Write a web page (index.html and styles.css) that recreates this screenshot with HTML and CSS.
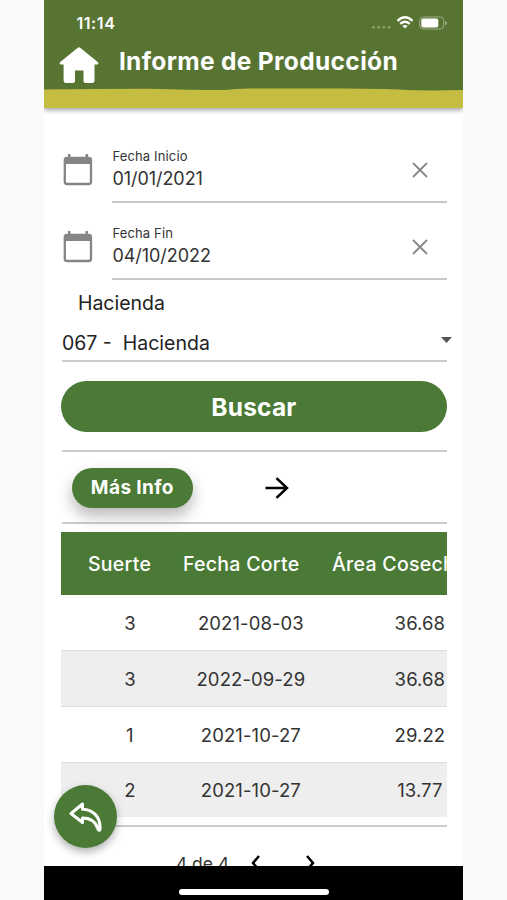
FILE: index.html
```html
<!DOCTYPE html>
<html lang="es">
<head>
<meta charset="utf-8">
<title>Informe de Producción</title>
<link rel="stylesheet" href="styles.css">
</head>
<body>
<div class="phone">
  <header class="header">
    <div class="status">
      <span class="time">11:14</span>
      <svg class="status-icons" width="76" height="16" viewBox="0 0 76 16">
        <g fill="#95a67e"><circle cx="2.5" cy="12.3" r="1.3"/><circle cx="7.7" cy="12.3" r="1.3"/><circle cx="12.9" cy="12.3" r="1.3"/><circle cx="18.1" cy="12.3" r="1.3"/></g>
        <g fill="none" stroke="#fff" stroke-width="2.4"><path d="M26.500 5.800Q34 -1.200 41.500 5.800"/><path d="M29.300 8.800Q34 4.600 38.700 8.800"/></g>
        <path d="M31.4 11Q34 8.8 36.6 11L34 13.5Z" fill="#fff"/>
        <rect x="48.7" y="2" width="24" height="12" rx="3.6" fill="none" stroke="#9cac87"/>
        <rect x="50.3" y="3.6" width="17" height="8.8" rx="2" fill="#fff"/>
        <path d="M74 6v4q2-.5 2-2t-2-2" fill="#9cac87"/>
      </svg>
    </div>
    <div class="title-row">
      <svg class="home" width="40" height="38" viewBox="0 0 40 38"><path d="M20 1.2Q20.800 1.200 21.500 2L39 16.200Q40 18 38.500 18.500H35.500V34.500Q35.500 37 33 37H26.500Q24.500 37 24.500 35V24.500H16V35Q16 37 14 37H7Q4.600 37 4.600 34.500V18.500H1.500Q0 18 1 16.200L18.500 2Q19.200 1.200 20 1.200Z" fill="#fff"/></svg>
      <h1>Informe de Producción</h1>
    </div>
    <svg class="wave" width="419" height="20" viewBox="0 0 419 20"><path d="M0 1.500Q50 .8 105 .8Q150 2 180 2Q192 .8 205 .5H300Q340 .7 355 1.500Q380 3 419 2V20H0Z" fill="#c4bd42"/></svg>
  </header>
  <main class="content">
    <div class="field">
      <svg class="calendar" width="30" height="32" viewBox="0 0 30 32"><path d="M6.200 0v4M23.800 0v4" stroke="#858585" stroke-width="2.500"/><rect x="1.800" y="3.800" width="26.200" height="26.200" rx="2.200" fill="none" stroke="#858585" stroke-width="2.300"/><path d="M2 4h26v6H2z" fill="#858585"/></svg>
      <div class="input">
        <div><div class="label">Fecha Inicio</div><div class="value">01/01/2021</div></div>
        <svg class="clear" width="16" height="16" viewBox="0 0 16 16"><path d="M1 1l14 14M15 1L1 15"/></svg>
      </div>
    </div>
    <div class="field">
      <svg class="calendar" width="30" height="32" viewBox="0 0 30 32"><path d="M6.200 0v4M23.800 0v4" stroke="#858585" stroke-width="2.500"/><rect x="1.800" y="3.800" width="26.200" height="26.200" rx="2.200" fill="none" stroke="#858585" stroke-width="2.300"/><path d="M2 4h26v6H2z" fill="#858585"/></svg>
      <div class="input">
        <div><div class="label">Fecha Fin</div><div class="value">04/10/2022</div></div>
        <svg class="clear" width="16" height="16" viewBox="0 0 16 16"><path d="M1 1l14 14M15 1L1 15"/></svg>
      </div>
    </div>
    <div class="select-label">Hacienda</div>
    <div class="select"><span>067 -&nbsp; Hacienda</span><svg width="11" height="6" viewBox="0 0 11 6"><path d="M0 0h11L5.500 6z" fill="#555"/></svg></div>
    <button class="search">Buscar</button>
    <div class="actions">
      <button class="more">Más Info</button>
      <svg width="24" height="22" viewBox="0 0 24 22"><path d="M.5 11H22M11.500 1.200L22 11L11.500 20.800" fill="none" stroke="#000" stroke-width="2.500"/></svg>
    </div>
    <div class="table">
      <div class="row head"><span class="c1">Suerte</span><span class="c2">Fecha Corte</span><span class="c3">Área Cosechada</span></div>
      <div class="row"><span>3</span><span>2021-08-03</span><span>36.68</span></div>
      <div class="row"><span>3</span><span>2022-09-29</span><span>36.68</span></div>
      <div class="row"><span>1</span><span>2021-10-27</span><span>29.22</span></div>
      <div class="row"><span>2</span><span>2021-10-27</span><span>13.77</span></div>
    </div>
    <div class="pager">
      <span>4 de 4</span>
      <svg class="prev" width="9" height="16" viewBox="0 0 9 16"><path d="M8 1L2 8l6 7"/></svg>
      <svg class="next" width="9" height="16" viewBox="0 0 9 16"><path d="M1 1l6 7-6 7"/></svg>
    </div>
  </main>
  <div class="back">
    <svg width="34" height="30" viewBox="0 0 34 30"><path d="M2 11.500L13.500 2V7.300C23 7.500 32 14 31 27.500Q30.500 29.200 29.200 27.500C27 20 21 16 13.500 16V20.500Z" fill="none" stroke="#fff" stroke-width="3" stroke-linejoin="round"/></svg>
  </div>
  <footer class="home-bar"><span></span></footer>
</div>
</body>
</html>
```
FILE: styles.css
```css
* { box-sizing: border-box; }
body { margin: 0; height: 900px; overflow: hidden; background: #fafafa; font-family: Inter, "Liberation Sans", sans-serif; color: #333; }
svg { display: block; flex: none; }
.phone { position: relative; width: 419px; height: 900px; margin-left: 44.400px; background: #fff; display: flex; flex-direction: column; overflow: hidden; }
.header { flex: none; height: 108px; background: #587433; color: #fff; box-shadow: 0 2px 5px rgba(0,0,0,.38); display: flex; flex-direction: column; z-index: 1; }
.status { height: 43px; padding: 3px 16px 0 32px; display: flex; align-items: center; justify-content: space-between; }
.time { font-size: 16px; font-weight: 600; letter-spacing: .6px; }
.title-row { height: 45px; padding: 1px 0 0 14.500px; display: flex; align-items: center; gap: 20px; }
.home { margin-top: -3px; }
h1 { margin: -11px 0 0; font-size: 24.500px; line-height: 30px; font-weight: 700; letter-spacing: .35px; white-space: nowrap; }
.wave { width: 100%; }
.content { flex: 1; min-height: 0; overflow: hidden; padding: 18px 16.500px 0; display: flex; flex-direction: column; }
.field { flex: none; height: 77px; display: flex; align-items: flex-start; gap: 19.500px; padding-left: 2px; }
.calendar { margin-top: 28px; }
.input { flex: 1; height: 77px; border-bottom: 2px solid #c8c8c8; display: flex; justify-content: space-between; padding: 22px 19px 0 0; }
.label { font-size: 13px; line-height: 17px; letter-spacing: .15px; }
.value { font-size: 18px; line-height: 28px; letter-spacing: -.05px; }
.clear { margin-top: 14px; fill: none; stroke: #888; stroke-width: 1.800; }
.select-label { flex: none; height: 45px; padding: 9px 0 0 17px; font-size: 19.500px; line-height: 28px; color: #222; }
.select { flex: none; height: 37px; margin-left: 1px; border-bottom: 2px solid #ccc; display: flex; justify-content: space-between; font-size: 19.500px; line-height: 36px; color: #222; }
.select svg { margin: 12px -5.500px 0 0; }
button { border: 0; background: #4a7a35; color: #fff; font-family: inherit; font-weight: 700; padding: 0; }
.search { flex: none; height: 51px; margin-top: 19px; border-radius: 26px; font-size: 24.500px; letter-spacing: .2px; }
.actions { flex: none; height: 74px; margin: 18px 0 0 1px; border-top: 2px solid #ccc; border-bottom: 2px solid #ccc; display: flex; align-items: center; gap: 72px; padding: 1px 0 0 10px; }
.more { width: 121px; height: 40px; border-radius: 20px; font-size: 19px; letter-spacing: .4px; box-shadow: 0 8px 15px rgba(0,0,0,.28); }
.table { flex: none; height: 295px; margin-top: 8px; padding-bottom: 8px; border-bottom: 2px solid #ccc; overflow: hidden; }
.row { display: grid; grid-template-columns: 107px 148px 192px; align-items: center; height: 56px; width: 447px; font-size: 18.500px; letter-spacing: .1px; border-bottom: 1px solid #ddd; text-align: center; }
.row:nth-child(odd) { background: #eee; }
.row:last-child { height: 54px; border: 0; }
.row span:nth-child(1) { padding-left: 31px; }
.row span:nth-child(2) { padding-left: 18px; }
.row span:nth-child(3) { padding-left: 16px; }
.row.head { height: 63px; background: #4a7a35; color: #fff; border: 0; font-weight: 500; font-size: 19.500px; letter-spacing: .3px; text-align: left; padding-top: 1px; }
.row.head .c1 { padding-left: 27px; }
.row.head .c2 { padding-left: 15px; }
.pager { flex: none; height: 50px; margin-top: 11px; display: flex; align-items: center; padding-left: 115px; font-size: 17.500px; }
.pager svg { fill: none; stroke: #000; stroke-width: 2.500; }
.prev { margin-left: 22px; }
.next { margin-left: 46px; }
.back { position: absolute; left: 10px; top: 785px; width: 63px; height: 63px; border-radius: 50%; background: #4a7a35; box-shadow: 0 4px 9px rgba(0,0,0,.3); display: flex; align-items: center; justify-content: center; }
.home-bar { flex: none; height: 34px; background: #000; display: flex; justify-content: center; padding-top: 23px; }
.home-bar span { width: 150px; height: 6px; border-radius: 3px; background: #fff; }
```
